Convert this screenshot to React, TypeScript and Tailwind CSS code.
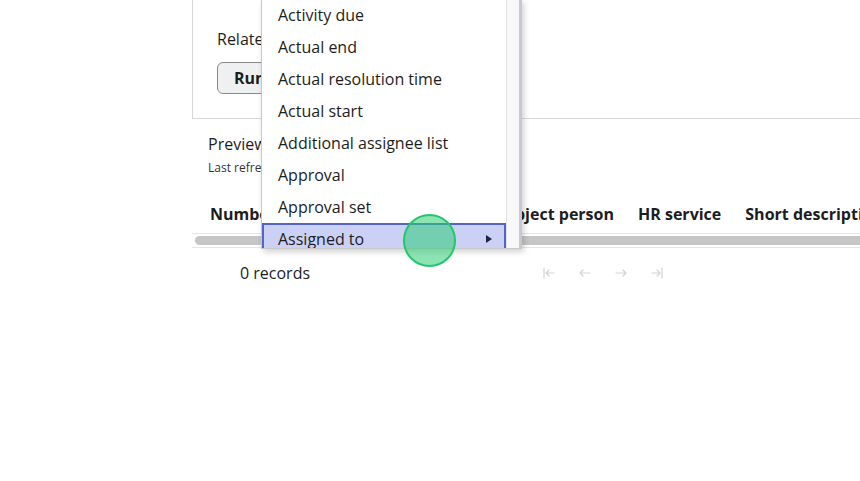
import React from 'react';

const items = [
  'Activity due',
  'Actual end',
  'Actual resolution time',
  'Actual start',
  'Additional assignee list',
  'Approval',
  'Approval set',
];

const Arrow = ({ d }: { d: string }) => (
  <svg width="16" height="16" viewBox="0 0 16 16" fill="none" stroke="#d4d4d4" strokeWidth="1.2" strokeLinecap="round" strokeLinejoin="round">
    <path d={d} />
  </svg>
);

const App = () => {
  return (
    <div className="relative w-[860px] h-[481px] overflow-hidden bg-white text-[#1d1d1d] font-['Open_Sans',sans-serif]">
      <div className="pl-[192px]">
        {/* condition card */}
        <div className="h-[119px] border-l border-b border-[#d8d8d8] pl-6 pt-[28px]">
          <p className="text-[16px] leading-[22px]">Related</p>
          <button className="mt-[12px] h-[32px] px-4 rounded-md border border-[#8a8a8a] bg-[#eef0f1] text-[16px] font-bold">
            Run
          </button>
        </div>

        {/* preview */}
        <div className="pl-4 pt-[14px]">
          <p className="text-[16px] leading-[22px]">Preview</p>
          <p className="mt-[5px] text-[12px] leading-[16px] text-[#333]">Last refreshed</p>
        </div>

        <div className="mt-[21px] flex items-center h-[37px] pb-[2px] border-b border-[#e6e6e6] text-[16px] font-bold whitespace-nowrap">
          <span className="shrink-0 ml-[18px] w-[280px]">Number</span>
          <span className="shrink-0 w-[124px] text-right">Subject person</span>
          <span className="shrink-0 ml-[24px]">HR service</span>
          <span className="shrink-0 ml-[24px]">Short description</span>
        </div>
        <div className="h-[14px] border-b border-[#e6e6e6] flex items-center pl-[3px]">
          <div className="h-[9px] flex-1 rounded-l-full bg-[#c6c6c6]" />
        </div>

        <div className="flex items-center h-[50px] text-[16px]">
          <span className="ml-[48px] w-[301px]">0 records</span>
          <div className="flex gap-5">
            <Arrow d="M3 3v10M13 8H5M8 5L5 8l3 3" />
            <Arrow d="M13 8H3M6 5L3 8l3 3" />
            <Arrow d="M3 8h10M10 5l3 3-3 3" />
            <Arrow d="M3 8h8M8 5l3 3-3 3M13 3v10" />
          </div>
        </div>
      </div>

      {/* field menu */}
      <div className="absolute left-[261px] top-[-1px] w-[261px] h-[250px] bg-white border-x border-b border-[#c8c8c8] shadow-[2px_3px_6px_rgba(0,0,0,0.18)] flex overflow-hidden">
        <ul className="w-[244px] text-[16px]">
          {items.map((t) => (
            <li key={t} className="h-[32px] flex items-center pl-4">
              {t}
            </li>
          ))}
          <li className="h-[32px] flex items-center justify-between pl-[14px] pr-3 bg-[#cbd0f5] border-2 border-[#5563c8]">
            <span>Assigned to</span>
            <svg width="6" height="8" viewBox="0 0 6 8">
              <path d="M0 0L6 4L0 8Z" fill="#1e2540" />
            </svg>
          </li>
        </ul>
        <div className="flex-1 bg-[#f8f8f8] border-l border-[#e2e2e2] flex justify-end">
          <div className="w-[2px] bg-[#c4cad0]" />
        </div>
      </div>

      {/* click indicator */}
      <div className="absolute left-[403px] top-[214px] w-[53px] h-[53px] rounded-full bg-[rgba(45,205,120,0.55)] border-2 border-[#22c76a]" />
    </div>
  );
};

export default App;
